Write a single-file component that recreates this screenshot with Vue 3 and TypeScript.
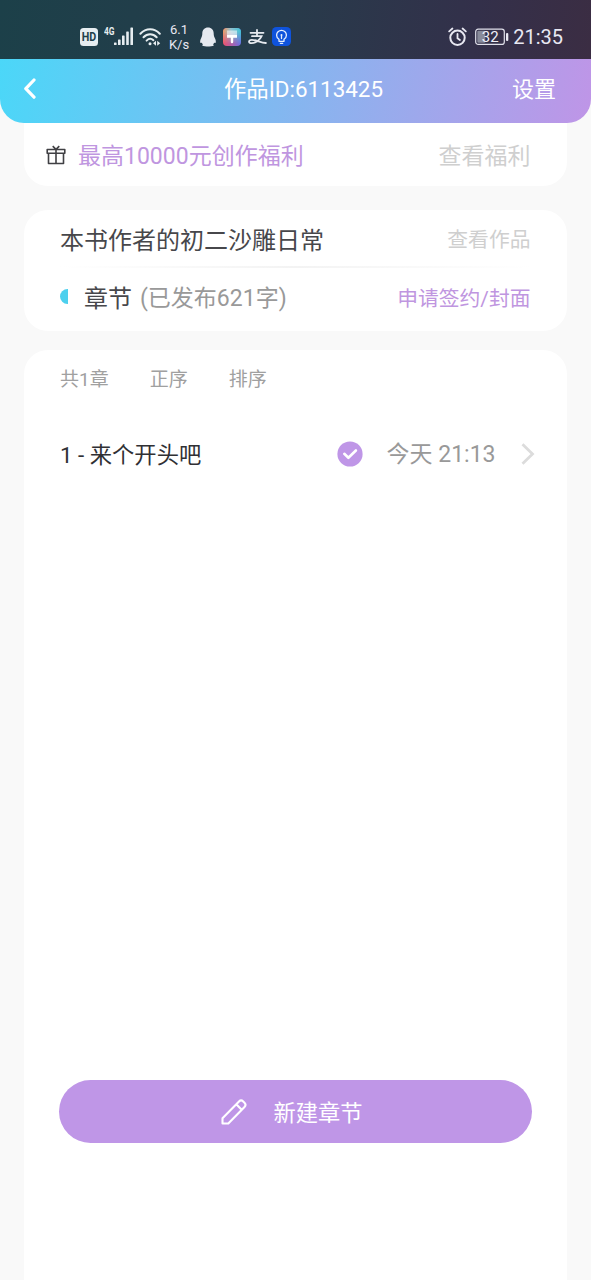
<script setup lang="ts">
interface ListTab {
  id: string
  label: string
}

const workId = '6113425'
const tabs: ListTab[] = [
  { id: 'count', label: '共1章' },
  { id: 'asc', label: '正序' },
  { id: 'sort', label: '排序' },
]
const chapters = [{ no: 1, title: '来个开头吧', time: '今天 21:13' }]
</script>

<template>
  <div class="screen">
    <div class="status">
      <svg class="hd" width="18" height="18" viewBox="0 0 18 18">
        <rect width="18" height="18" rx="3.5" fill="#e6edf0" />
        <text x="9" y="13.400" text-anchor="middle" textLength="14.5" lengthAdjust="spacingAndGlyphs" class="hd-text">HD</text>
      </svg>
      <svg class="signal" width="30" height="22" viewBox="0 0 30 22">
        <text x="0" y="9" class="net" textLength="10.5" lengthAdjust="spacingAndGlyphs">4G</text>
        <g fill="#e6edf0">
          <rect x="10" y="16.5" width="2.6" height="2.5" rx=".6" />
          <rect x="14" y="13.5" width="2.6" height="5.5" rx=".6" />
          <rect x="18" y="9.5" width="2.6" height="9.5" rx=".6" />
          <rect x="22.2" y="5.5" width="2.6" height="13.5" rx=".6" />
          <rect x="26.4" y="1.5" width="2.6" height="17.5" rx=".6" />
        </g>
      </svg>
      <svg class="wifi" width="22" height="20" viewBox="0 0 22 20" fill="none" stroke="#e6edf0" stroke-width="2" stroke-linecap="round">
        <path d="M1.4 6.7C7 .7 15.2.7 20.8 6.7" />
        <path d="M4.5 10.2c3.9-4 9.3-4 13.2 0" />
        <path d="M7.6 13.6c2-2 4.8-2.2 6.8-.4" />
        <circle cx="11" cy="16.8" r="1.5" fill="#e6edf0" stroke="none" />
        <path d="M17 13.8v5l-3-2.5zM18.2 13.8v5l3-2.5z" fill="#e6edf0" stroke="none" />
      </svg>
      <div class="speed"><span>6.1</span><span>K/s</span></div>
      <svg class="qq" width="18" height="20" viewBox="0 0 18 20">
        <path d="M9 .5c3.500 0 5.700 2.500 5.700 6 0 2 .4 3.100 1.200 4.700.9 1.800 1.200 3.500.7 4.500-.4.500-1 .2-1.500-.3-.2 1-.6 1.700-1 2.200.5.400.7.800.5 1.200-.6.600-4.300.7-5.600.7s-5-.1-5.600-.7c-.2-.4 0-.8.500-1.200-.4-.5-.8-1.200-1-2.200-.5.500-1.100.8-1.500.3-.5-1-.2-2.700.7-4.500.8-1.600 1.200-2.700 1.200-4.700 0-3.500 2.200-6 5.700-6z" fill="#e6eaf0" />
      </svg>
      <svg class="brush" width="18" height="18" viewBox="0 0 18 18">
        <defs>
          <linearGradient id="brushTop" x1="0" y1="0" x2="1" y2="0">
            <stop offset="0" stop-color="#ee9a65" />
            <stop offset=".45" stop-color="#8fc0d0" />
            <stop offset="1" stop-color="#3fc3d5" />
          </linearGradient>
          <linearGradient id="brushBottom" x1="0" y1="0" x2="1" y2="0">
            <stop offset="0" stop-color="#f0506c" />
            <stop offset="1" stop-color="#6a6fe6" />
          </linearGradient>
          <linearGradient id="brushFade" x1="0" y1="0" x2="0" y2="1">
            <stop offset=".2" stop-color="#fff" />
            <stop offset=".9" stop-color="#000" />
          </linearGradient>
          <mask id="brushMask"><rect width="18" height="18" fill="url(#brushFade)" /></mask>
        </defs>
        <rect width="18" height="18" rx="4" fill="url(#brushBottom)" />
        <rect width="18" height="18" rx="4" fill="url(#brushTop)" mask="url(#brushMask)" />
        <path d="M4 2.500h10V7H4z" fill="#fff" opacity=".55" />
        <path d="M4 7h10v2.800h-3.800V14a1.200 1.200 0 0 1-2.400 0V9.800H4z" fill="#fff" />
      </svg>
      <svg class="alipay" width="19" height="16" viewBox="0 0 19 16" fill="none" stroke="#e6eaf0" stroke-width="1.800" stroke-linecap="round">
        <path d="M2.500 3.800h13M9 1v6M4 7.200h9.600C12 11 7.500 14.200 3.600 14.200c-3.600 0-3.300-3.400.3-3.400 4.500 0 8.500 2.800 14 3.200" />
      </svg>
      <svg class="bulb" width="19" height="19" viewBox="0 0 19 19" fill="none">
        <rect width="19" height="19" rx="4.500" fill="#0f53dc" />
        <g stroke="#e6eefc" stroke-width="1.300" stroke-linecap="round" stroke-linejoin="round">
          <path d="M7 14.300v-2C5.300 11.200 4.600 9.800 4.600 8.200a4.900 4.900 0 0 1 9.800 0c0 1.600-.7 3-2.400 4.100v2z" />
          <path d="M8.300 16.300h2.400M9.500 11.500V8.500" />
        </g>
        <circle cx="9.500" cy="8" r="1" fill="#e6eefc" />
      </svg>
      <svg class="alarm" width="19" height="20" viewBox="0 0 19 20" fill="none" stroke="#e8e8f2" stroke-width="2" stroke-linecap="round">
        <circle cx="9.500" cy="10.800" r="7.200" />
        <path d="M9.500 7v4.200l2.400 1.800M1.200 4.400 4.400 1.500M17.800 4.400l-3.200-2.900" stroke-width="1.800" />
      </svg>
      <svg class="battery" width="34" height="18" viewBox="0 0 34 18">
        <rect x=".7" y="1.200" width="28.600" height="15.200" rx="2.500" fill="none" stroke="#e0e0ea" stroke-width="1.200" />
        <rect x="2.300" y="2.800" width="8" height="12" rx="1" fill="#888b9b" />
        <rect x="31" y="5" width="2.300" height="8" rx="1" fill="#e8e8f2" />
        <text x="15.200" y="13.900" text-anchor="middle" class="level">32</text>
      </svg>
      <span class="clock">21:35</span>
    </div>

    <header class="header">
      <svg class="back" width="14" height="22" viewBox="0 0 14 22" fill="none" stroke="#fff" stroke-width="3.200" stroke-linecap="round" stroke-linejoin="round">
        <path d="M11 2 2.800 10.700 11 19.200" />
      </svg>
      <h1 class="title">作品ID:{{ workId }}</h1>
      <span class="settings">设置</span>
    </header>

    <section class="card welfare">
      <svg class="gift" width="20" height="20" viewBox="0 0 20 20" fill="none" stroke="#404044" stroke-width="1.600" stroke-linejoin="round">
        <path d="M1.200 4.500h17.600v3.700H1.200zM2.500 8.200h15v10.300h-15zM10 4.500v14M6.700 1.200 10 4.300l3.300-3.100" />
      </svg>
      <span class="promo">最高10000元创作福利</span>
      <span class="link big">查看福利</span>
    </section>

    <section class="card work">
      <div class="row name-row">
        <span class="name">本书作者的初二沙雕日常</span>
        <span class="link">查看作品</span>
      </div>
      <div class="divider"></div>
      <div class="row chapter-row">
        <span class="dot"></span>
        <span class="name">章节</span>
        <span class="words">(已发布621字)</span>
        <span class="apply">申请签约/封面</span>
      </div>
    </section>

    <section class="card list">
      <nav class="tabs">
        <span v-for="tab in tabs" :key="tab.id">{{ tab.label }}</span>
      </nav>
      <div v-for="c in chapters" :key="c.no" class="chapter">
        <span class="chapter-title">{{ c.no }} - {{ c.title }}</span>
        <svg class="check" width="26" height="26" viewBox="0 0 26 26" fill="none">
          <circle cx="13" cy="13" r="12.600" fill="#bf96e7" />
          <path d="m7.300 12.800 4.100 4 7.500-7.300" stroke="#fff" stroke-width="2.600" stroke-linecap="round" stroke-linejoin="round" />
        </svg>
        <span class="time">{{ c.time }}</span>
        <svg class="arrow" width="14" height="22" viewBox="0 0 14 22" fill="none" stroke="#dcdcdc" stroke-width="2.800">
          <path d="m1.500 1.200 10 9.800-10 9.800" />
        </svg>
      </div>
      <button class="create" type="button">
        <svg width="28" height="28" viewBox="0 0 28 28" fill="none" stroke="#fff" stroke-width="2.100" stroke-linejoin="round" stroke-linecap="round">
          <path d="M2.500 25.500v-5.300L19 3.500c1.300-1.300 2.900-1.300 4.200 0l1.300 1.300c1.300 1.300 1.300 2.800 0 4.100L8.300 25.500zM16.300 6.300l5.400 5.400" />
        </svg>
        <span>新建章节</span>
      </button>
    </section>
  </div>
</template>

<style>
body {
  background: #f9f9f9;
}
</style>

<style scoped>
.screen {
  width: 591px;
  height: 1280px;
  display: flex;
  flex-direction: column;
  overflow: hidden;
  background: #f9f9f9;
  font-family: Roboto, "Noto Sans CJK SC", sans-serif;
  white-space: nowrap;
}
.status {
  flex: none;
  height: 59px;
  box-sizing: border-box;
  display: flex;
  align-items: center;
  padding: 14px 28px 0 80px;
  background: linear-gradient(97deg, #1c4049 0%, #263c4b 45%, #33304a 80%, #3b2d43 100%);
  color: #e8e8f2;
}
.status svg {
  flex: none;
}
.hd-text {
  font: 700 12.5px Roboto, sans-serif;
  fill: #203f4a;
}
.net {
  font: 700 10px Roboto, sans-serif;
  fill: #e6edf0;
}
.signal {
  margin-left: 6px;
}
.wifi {
  margin-left: 5px;
}
.speed {
  width: 22px;
  margin-left: 7px;
  display: flex;
  flex-direction: column;
  align-items: center;
  font-size: 13px;
  line-height: 15px;
}
.qq {
  margin-left: 9px;
}
.brush {
  margin-left: 6px;
}
.alipay {
  margin-left: 7px;
}
.bulb {
  margin-left: 5px;
}
.alarm {
  margin-left: auto;
}
.battery {
  margin-left: 8px;
}
.level {
  font: 15px Roboto, sans-serif;
  fill: #eeeef6;
}
.clock {
  margin-left: 4px;
  font-size: 20px;
  line-height: 24px;
}
.header {
  flex: none;
  height: 64px;
  box-sizing: border-box;
  padding: 0 35px 4px 23px;
  display: grid;
  grid-template-columns: 100px 1fr 84px;
  align-items: center;
  border-radius: 0 0 24px 24px;
  background: linear-gradient(100deg, #4bd7f8 0%, #bf95e7 100%);
  color: #fff;
  font-size: 22px;
}
.title {
  margin: 0;
  padding: 0 0 4px 12px;
  font-size: 22.4px;
  font-weight: 400;
  text-align: center;
}
.settings {
  padding-bottom: 4px;
  text-align: right;
}
.card {
  flex: none;
  margin: 0 24px;
  box-sizing: border-box;
  background: #fff;
  border-radius: 24px;
}
.welfare {
  height: 63px;
  padding: 0 36.5px 0 22px;
  display: flex;
  align-items: center;
  border-radius: 0 0 24px 24px;
}
.promo {
  margin-left: 12px;
  padding-bottom: 1px;
  font-size: 23px;
  color: #bf96e0;
}
.link {
  margin-left: auto;
  font-size: 20.8px;
  color: #cfcfcf;
}
.link.big {
  padding-bottom: 1px;
  font-size: 23px;
}
.work {
  height: 121px;
  margin-top: 24px;
  padding: 0 36.5px 0 36px;
}
.row {
  display: flex;
  align-items: center;
}
.name-row {
  height: 56px;
}
.divider {
  height: 2px;
  background: linear-gradient(90deg, #fff, #f3f3f3 50%, #fff);
}
.chapter-row {
  height: 57px;
}
.name {
  font-size: 24px;
  color: #47474b;
}
.dot {
  width: 8px;
  height: 15px;
  margin-right: 16px;
  border-radius: 8px 0 0 8px;
  background: #4dd0ee;
}
.words {
  margin-left: 8px;
  padding-bottom: 1px;
  font-size: 23px;
  color: #999;
}
.apply {
  margin-left: auto;
  font-size: 20.8px;
  color: #bf96e0;
}
.list {
  height: 930px;
  margin-top: 19px;
  padding: 0 35px 0 36px;
  border-radius: 24px 24px 0 0;
  display: flex;
  flex-direction: column;
}
.tabs {
  height: 58px;
  box-sizing: border-box;
  padding-bottom: 4px;
  display: flex;
  align-items: center;
  gap: 41px;
  font-size: 19px;
  color: #a0a0a0;
}
.chapter {
  height: 92px;
  display: flex;
  align-items: center;
}
.chapter-title {
  padding-bottom: 2px;
  font-size: 22.3px;
  color: #303034;
}
.check {
  margin-left: auto;
}
.time {
  margin-left: 24px;
  padding-bottom: 4px;
  font-size: 23px;
  color: #999;
}
.arrow {
  margin: 0 -2.5px 0 25px;
}
.create {
  margin: auto 0 137px -1px;
  height: 63px;
  border: 0;
  border-radius: 32px;
  background: #bf96e7;
  color: #fff;
  display: flex;
  align-items: center;
  justify-content: center;
  gap: 25px;
  padding: 0 14px 0 6px;
  font-family: inherit;
  font-size: 22.3px;
}
.create span {
  padding-bottom: 2px;
}
</style>
